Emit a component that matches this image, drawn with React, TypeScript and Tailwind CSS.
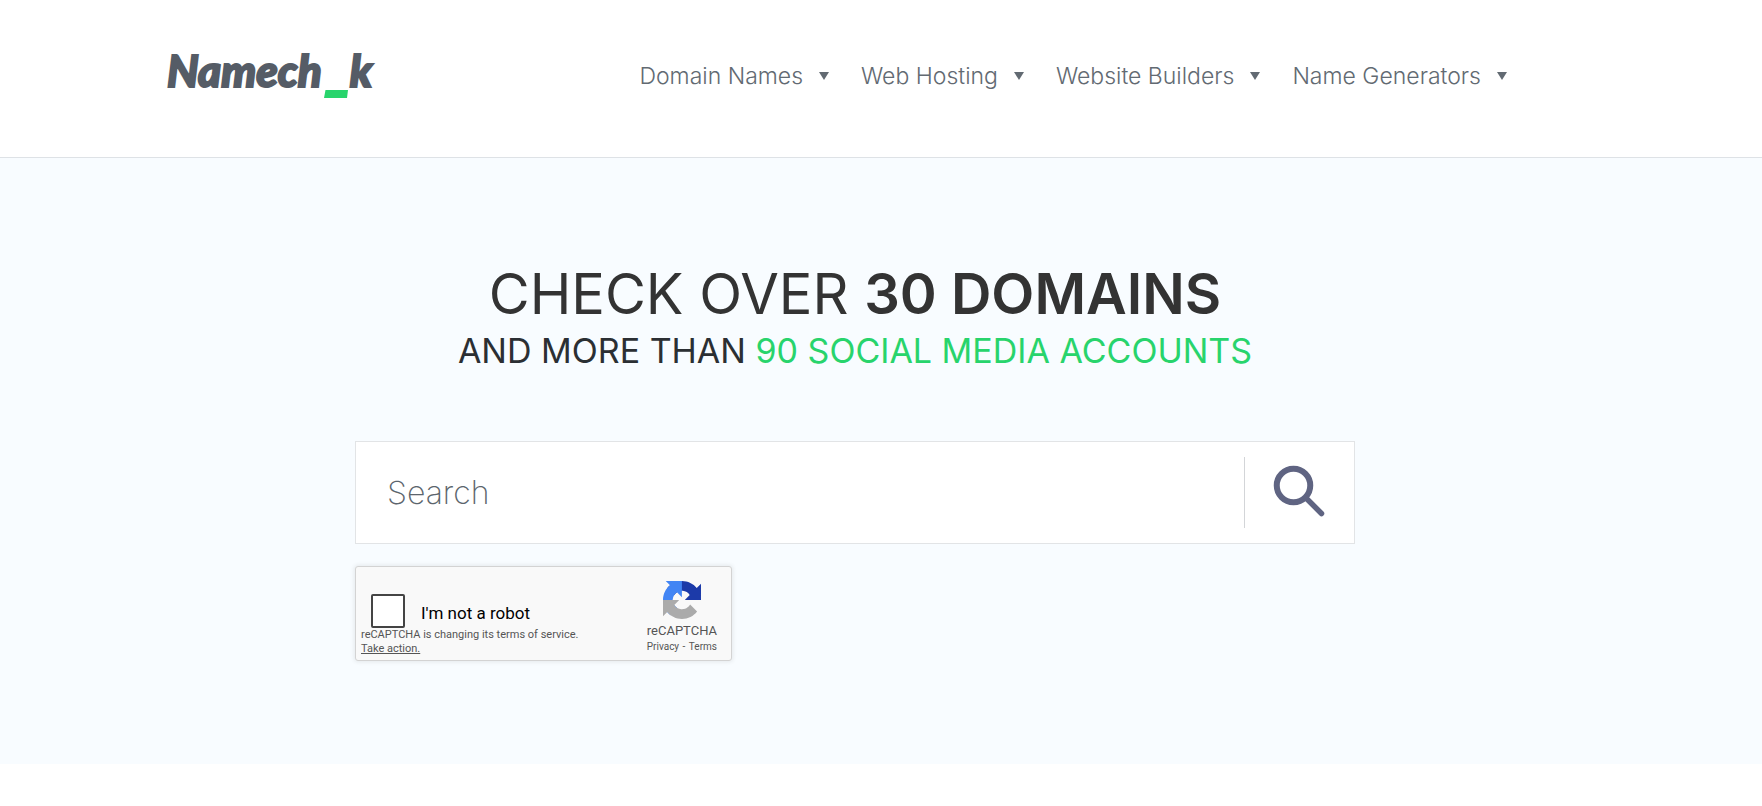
import { useState } from "react";

const menuItems = ["Domain Names", "Web Hosting", "Website Builders", "Name Generators"];

function Logo() {
  return (
    <a
      href="#"
      aria-label="Namech_k"
      className="block h-12 whitespace-nowrap font-['Lato',sans-serif] text-[44px] leading-[48px] font-black italic text-[#555c66] [-webkit-text-stroke:2px_#555c66]"
    >
      Namech
      <svg width="24" height="8" viewBox="0 0 24 8" className="mx-[2px] inline-block align-[-11px]" aria-hidden="true">
        <path d="M1.5 0H24l-1 8H0z" fill="#28d46c" />
      </svg>
      k
    </a>
  );
}

function RecaptchaLogo() {
  return (
    <svg width="38" height="38" viewBox="0 0 64 64" aria-hidden="true">
      <path
        fill="#1c3aa9"
        d="M64 31.955l-.033-1.37V4.687l-7.16 7.16C50.948 4.674 42.033.093 32.05.093c-10.4 0-19.622 4.96-25.458 12.64l11.736 11.86a15.55 15.55 0 0 1 4.754-5.334c2.05-1.6 4.952-2.906 8.968-2.906.485 0 .86.057 1.135.163 4.976.393 9.288 3.14 11.828 7.124l-8.307 8.307L64 31.953"
      />
      <path
        fill="#4285f4"
        d="M31.862.094l-1.37.033H4.594l7.16 7.16C4.58 13.147 0 22.06 0 32.046c0 10.4 4.96 19.622 12.64 25.458L24.5 45.768a15.55 15.55 0 0 1-5.334-4.754c-1.6-2.05-2.906-4.952-2.906-8.968 0-.485.057-.86.163-1.135.393-4.976 3.14-9.288 7.124-11.828l8.307 8.307L31.86.095"
      />
      <path
        fill="#ababab"
        d="M.001 32.045l.033 1.37v25.898l7.16-7.16c5.86 7.173 14.774 11.754 24.76 11.754 10.4 0 19.622-4.96 25.458-12.64l-11.736-11.86a15.55 15.55 0 0 1-4.754 5.334c-2.05 1.6-4.952 2.906-8.968 2.906-.485 0-.86-.057-1.135-.163-4.976-.393-9.288-3.14-11.828-7.124l8.307-8.307c-10.522.04-22.4.066-27.295-.005"
      />
    </svg>
  );
}

function Header() {
  return (
    <header className="border-b border-[#dee2e6] bg-white pr-[52px]">
      <div className="mx-auto flex max-w-[1376px] items-start justify-between pt-[46px] pb-[63px]">
        <Logo />
        <nav className="pt-4 pr-9">
          <ul className="flex gap-8">
            {menuItems.map((item) => (
              <li key={item}>
                <a href="#" className="flex items-center gap-4 text-[23px] leading-7 font-light whitespace-nowrap text-[#626a72]">
                  {item}
                  <svg width="10" height="8" viewBox="0 0 10 8" fill="currentColor" aria-hidden="true">
                    <path d="M0 0h10L5 8z" />
                  </svg>
                </a>
              </li>
            ))}
          </ul>
        </nav>
      </div>
    </header>
  );
}

function SearchForm() {
  const [query, setQuery] = useState("");

  return (
    <form onSubmit={(e) => e.preventDefault()} className="flex border border-[#e2e4e6] bg-white py-[15px]">
      <input
        type="text"
        aria-label="Search"
        placeholder="Search"
        value={query}
        onChange={(e) => setQuery(e.target.value)}
        className="h-[71px] min-w-0 flex-1 px-[31px] text-[32px] font-extralight text-gray-700 outline-none placeholder:text-[#5c656d]"
      />
      <button
        type="submit"
        aria-label="Submit search"
        className="flex w-[110px] items-center justify-center border-l border-[#d3d5d8] pr-[2px] pb-1"
      >
        <svg width="52" height="52" viewBox="0 0 52 52" fill="none" stroke="#5f6482" aria-hidden="true">
          <circle cx="20.5" cy="20.5" r="16.75" strokeWidth="6" />
          <path d="M33 33l15.5 15.5" strokeWidth="5.5" strokeLinecap="round" />
        </svg>
      </button>
    </form>
  );
}

function Recaptcha() {
  return (
    <div className="mt-[22px] flex h-[95px] w-[377px] justify-between rounded-[3px] border border-[#d3d3d3] bg-[#f9f9f9] font-['Roboto',sans-serif] text-[#555] shadow-[0_0_4px_1px_rgba(0,0,0,0.08)]">
      <div className="pt-[27px] pl-[5px]">
        <label className="flex h-[34px] items-start gap-4 pl-[10px] text-[17px] leading-[38px] text-black">
          <input type="checkbox" className="size-[34px] appearance-none rounded-[2px] border-2 border-[#444] bg-white" />
          <span>I'm not a robot</span>
        </label>
        <p className="text-[11px] leading-[14px]">
          reCAPTCHA is changing its terms of service.
          <br />
          <a href="#" className="underline">
            Take action.
          </a>
        </p>
      </div>
      <div className="flex flex-col items-center pt-[14px] pr-[14px]">
        <RecaptchaLogo />
        <p className="mt-1 text-[13px] leading-4">reCAPTCHA</p>
        <p className="text-[10px] leading-4">
          <a href="#">Privacy</a>
          <span aria-hidden="true" className="mx-px"> - </span>
          <a href="#">Terms</a>
        </p>
      </div>
    </div>
  );
}

export default function App() {
  return (
    <div className="bg-white font-['Inter',sans-serif]">
      <Header />
      <main className="bg-[#f8fcff] pt-[104px] pr-[52px] pb-[103px]">
        <div className="mx-auto max-w-[1000px]">
          <h1 className="pb-[65px] text-center uppercase">
            <span className="block text-[56px] leading-[64px] text-[#333]">
              Check over <strong className="font-semibold">30 domains</strong>
            </span>
            <span className="block text-[34px] leading-[50px] text-[#2b2f33]">
              and more than <span className="text-[#28d46c]">90 social media accounts</span>
            </span>
          </h1>
          <SearchForm />
          <Recaptcha />
        </div>
      </main>
    </div>
  );
}
